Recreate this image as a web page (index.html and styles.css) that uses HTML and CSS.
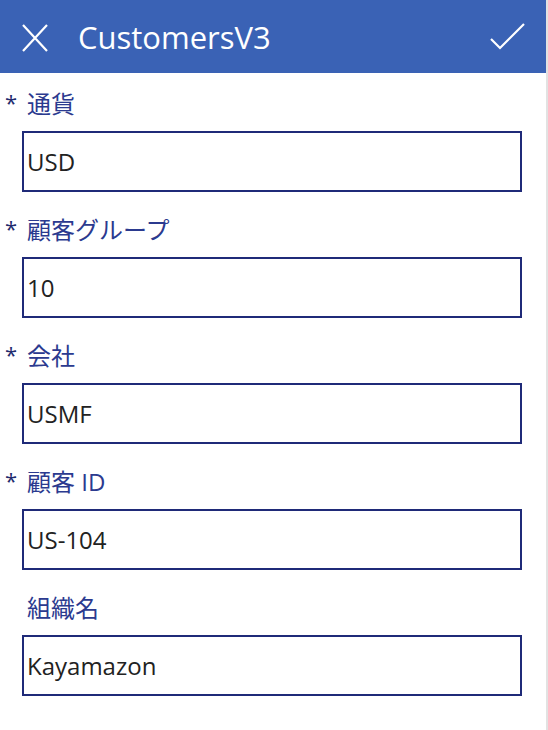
FILE: index.html
```html
<!DOCTYPE html>
<html lang="ja">
<head>
<meta charset="utf-8">
<title>CustomersV3</title>
<link rel="stylesheet" href="styles.css">
</head>
<body>
<div class="screen">
  <header class="header">
    <svg class="icon icon-close" width="26" height="28" viewBox="0 0 26 28" aria-hidden="true">
      <path d="M1 1 L25 27 M25 1 L1 27" stroke="#fff" stroke-width="2.2" fill="none"/>
    </svg>
    <h1 class="title">CustomersV3</h1>
    <svg class="icon icon-check" width="36" height="28" viewBox="0 0 36 28" aria-hidden="true">
      <path d="M1 16 L10 25 L34 1" stroke="#fff" stroke-width="2.2" fill="none"/>
    </svg>
  </header>
  <main class="form">
    <div class="field">
      <div class="label"><span class="req">*</span><span class="label-text">通貨</span></div>
      <div class="input">USD</div>
    </div>
    <div class="field">
      <div class="label"><span class="req">*</span><span class="label-text">顧客グループ</span></div>
      <div class="input">10</div>
    </div>
    <div class="field">
      <div class="label"><span class="req">*</span><span class="label-text">会社</span></div>
      <div class="input">USMF</div>
    </div>
    <div class="field">
      <div class="label"><span class="req">*</span><span class="label-text">顧客 ID</span></div>
      <div class="input">US-104</div>
    </div>
    <div class="field">
      <div class="label"><span class="req"></span><span class="label-text">組織名</span></div>
      <div class="input">Kayamazon</div>
    </div>
  </main>
</div>
</body>
</html>
```

FILE: styles.css
```css
html, body {
  margin: 0;
  padding: 0;
  background: #ffffff;
}

body {
  font-family: "Open Sans", "Noto Sans CJK JP", sans-serif;
}

.screen {
  width: 546px;
  min-height: 730px;
  border-right: 2px solid #e2e2e2;
  box-sizing: content-box;
}

.header {
  height: 73px;
  background: #3a62b5;
  display: flex;
  align-items: center;
  padding: 0 20px 0 22px;
  box-sizing: border-box;
}

.icon {
  display: block;
  flex: none;
}

.icon-close {
  margin-top: 2px;
}

.title {
  margin: 0 0 0 30px;
  flex: 1;
  color: #ffffff;
  font-weight: 400;
  font-size: 31px;
  line-height: 40px;
}

.icon-check {
  margin-top: 1px;
}

.form {
  display: flex;
  flex-direction: column;
  gap: 7px;
}

.field {
  display: flex;
  flex-direction: column;
}

.label {
  height: 58px;
  display: flex;
  align-items: center;
  color: #2b3a8f;
  font-size: 24px;
}

.req {
  width: 27px;
  box-sizing: border-box;
  padding-left: 5px;
  color: #1f2b6e;
  font-size: 22px;
}

.input {
  margin-left: 22px;
  width: 500px;
  height: 61px;
  box-sizing: border-box;
  border: 2px solid #1f2a78;
  padding-left: 3px;
  display: flex;
  align-items: center;
  color: #222222;
  font-size: 24px;
}
```
